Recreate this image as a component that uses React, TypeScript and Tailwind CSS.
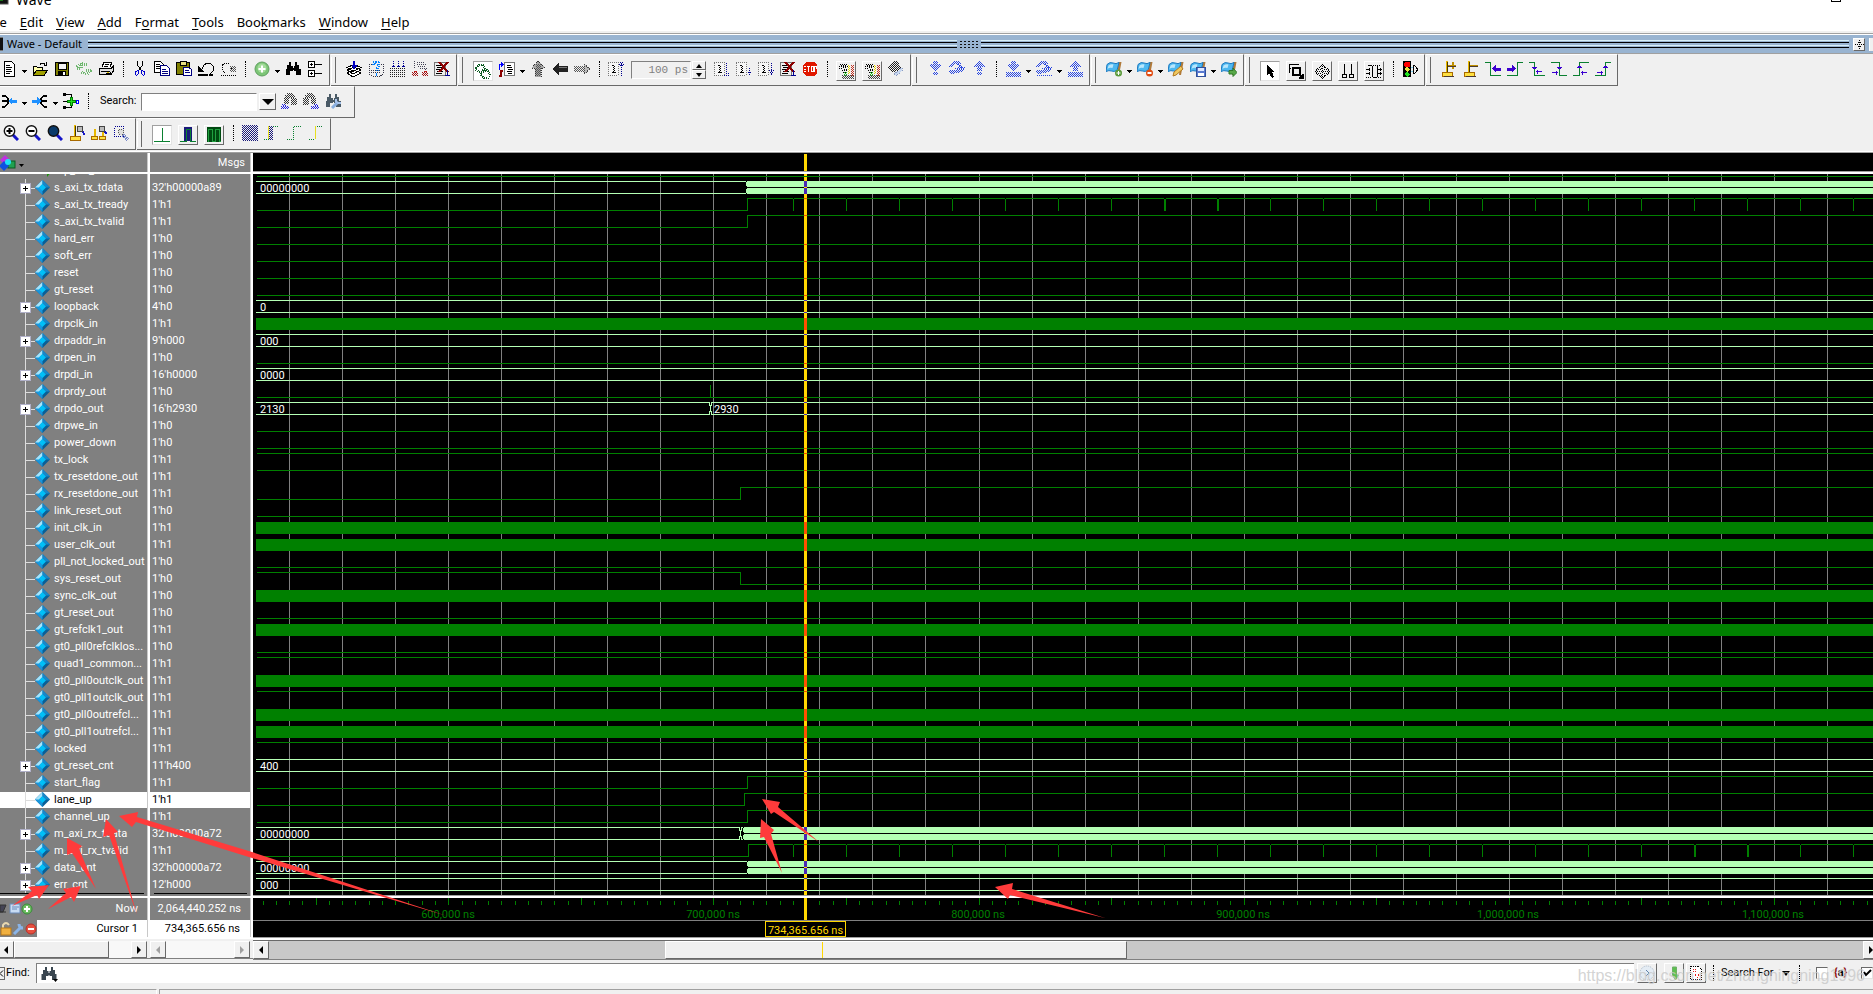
import React from 'react';

type Kind = 'low' | 'high' | 'clock' | 'bus';

interface Signal {
  name: string;
  value: string;
  kind: Kind;
  // x position where the level flips, or where a bus starts toggling
  edge?: number;
  label?: string;
  wide?: number[];
}

const SIGNALS: Signal[] = [
  { name: 's_axi_tx_tdata', value: "32'h00000a89", kind: 'bus', edge: 494, label: '00000000' },
  { name: 's_axi_tx_tready', value: "1'h1", kind: 'low', edge: 494, wide: [7, 8] },
  { name: 's_axi_tx_tvalid', value: "1'h1", kind: 'low', edge: 494 },
  { name: 'hard_err', value: "1'h0", kind: 'low' },
  { name: 'soft_err', value: "1'h0", kind: 'low' },
  { name: 'reset', value: "1'h0", kind: 'low' },
  { name: 'gt_reset', value: "1'h0", kind: 'low' },
  { name: 'loopback', value: "4'h0", kind: 'bus', label: '0' },
  { name: 'drpclk_in', value: "1'h1", kind: 'clock' },
  { name: 'drpaddr_in', value: "9'h000", kind: 'bus', label: '000' },
  { name: 'drpen_in', value: "1'h0", kind: 'low' },
  { name: 'drpdi_in', value: "16'h0000", kind: 'bus', label: '0000' },
  { name: 'drprdy_out', value: "1'h0", kind: 'low' },
  { name: 'drpdo_out', value: "16'h2930", kind: 'bus', label: '2130' },
  { name: 'drpwe_in', value: "1'h0", kind: 'low' },
  { name: 'power_down', value: "1'h0", kind: 'low' },
  { name: 'tx_lock', value: "1'h1", kind: 'high' },
  { name: 'tx_resetdone_out', value: "1'h1", kind: 'high' },
  { name: 'rx_resetdone_out', value: "1'h1", kind: 'low', edge: 487 },
  { name: 'link_reset_out', value: "1'h0", kind: 'low' },
  { name: 'init_clk_in', value: "1'h1", kind: 'clock' },
  { name: 'user_clk_out', value: "1'h1", kind: 'clock' },
  { name: 'pll_not_locked_out', value: "1'h0", kind: 'low' },
  { name: 'sys_reset_out', value: "1'h0", kind: 'high', edge: 487 },
  { name: 'sync_clk_out', value: "1'h0", kind: 'clock' },
  { name: 'gt_reset_out', value: "1'h0", kind: 'low' },
  { name: 'gt_refclk1_out', value: "1'h1", kind: 'clock' },
  { name: 'gt0_pll0refclklos...', value: "1'h0", kind: 'low' },
  { name: 'quad1_common...', value: "1'h1", kind: 'high' },
  { name: 'gt0_pll0outclk_out', value: "1'h1", kind: 'clock' },
  { name: 'gt0_pll1outclk_out', value: "1'h1", kind: 'high' },
  { name: 'gt0_pll0outrefcl...', value: "1'h1", kind: 'clock' },
  { name: 'gt0_pll1outrefcl...', value: "1'h1", kind: 'clock' },
  { name: 'locked', value: "1'h1", kind: 'high' },
  { name: 'gt_reset_cnt', value: "11'h400", kind: 'bus', label: '400' },
  { name: 'start_flag', value: "1'h1", kind: 'low', edge: 494 },
  { name: 'lane_up', value: "1'h1", kind: 'low', edge: 491 },
  { name: 'channel_up', value: "1'h1", kind: 'low', edge: 494 },
  { name: 'm_axi_rx_tdata', value: "32'h00000a72", kind: 'bus', edge: 491, label: '00000000' },
  { name: 'm_axi_rx_tvalid', value: "1'h1", kind: 'low', edge: 495, wide: [17, 18] },
  { name: 'data_cnt', value: "32'h00000a72", kind: 'bus', edge: 495, label: '00000000' },
  { name: 'err_cnt', value: "12'h000", kind: 'bus', label: '000' },
];

const SELECTED = 'lane_up';
const WAVE_W = 2600;
const CURSOR_X = 551;
const GREEN = '#008000';
const PALE = '#b4ffb4';
const ORANGE = '#ff4500';
const PURPLE = '#4b28b4';
const GOLD = '#ffd700';

const range = (n: number) => Array.from({ length: n }, (_, i) => i);

/* ---------- toolbar icons, 16x16 grid ---------- */

const Doc = ({ x = 0, c = '#000' }: { x?: number; c?: string }) => (
  <g>
    <path d={`M${x + 1.5} .5h7l3 3v12h-10z`} fill="#fff" stroke={c} />
    <path d={`M${x + 3} 4.5h4M${x + 3} 6.5h6M${x + 3} 8.5h5M${x + 3} 10.5h6M${x + 3} 12.5h4`} stroke={c} />
  </g>
);

// checkered fill, the look of a disabled icon
const Dither = ({ x, y, w, h, c }: { x: number; y: number; w: number; h: number; c: string }) => (
  <g stroke={c} strokeDasharray="1 1">
    {range(h).map((i) => <path key={i} d={`M${x} ${y + i + 0.5}h${w}`} strokeDashoffset={i % 2} />)}
  </g>
);

const WaveDoc = ({ arrow }: { arrow: string }) => (
  <g>
    <rect x=".5" y="1.5" width="10" height="13" rx="1" fill="#f6f6f6" stroke="#777" strokeDasharray="1 1" />
    <path d="M4 4.500h2M4 11.500h4" stroke="#000" />
    <Dither x={5} y={4} w={2} h={8} c="#000" />
    <path d={arrow} stroke="#000090" fill="none" strokeDasharray="1 1" strokeWidth="1" />
  </g>
);

const StopDoc = () => (
  <g>
    <rect x=".5" y="1.5" width="11" height="13" fill="#eee" stroke="#777" />
    <path d="M2 4.5h6M3 6.5h5M2 8.5h5M3 10.5h6M2 12.5h6" stroke="#000" />
    <path d="M5 1l9 10M14 1L5 11" stroke="#8b0000" strokeWidth="2" />
    <path d="M13.5 9v5M11 14.5h5" stroke="#000090" strokeWidth="1" />
  </g>
);

const Flag = ({ children }: { children: React.ReactNode }) => (
  <g shapeRendering="auto">
    <path d="M12.500 1h3l-2.500 13h-2z" fill="#b07a3a" />
    <path d="M1 3.500q3-3 6-1.500t6-.500l-2 8q-3 1.500-5.500.500T0 10.500z" fill="#4db8f0" stroke="#1a78c0" />
    <path d="M2.500 4.500q3-2 5-1l-1 3.500q-3-1-5 1z" fill="#b9e6fc" />
    {children}
  </g>
);

const Bin = ({ c = '#000', dash = 'none' }: { c?: string; dash?: string }) => (
  <g stroke={c} strokeDasharray={dash}>
    <path d="M5 1v5M11 1v5" strokeWidth="2" />
    <path d="M3.500 4v9M6 5v5M10 5v5M12.500 4v9" strokeWidth="3" />
    <path d="M1.500 8v6M14.500 8v6M7 8h2" strokeWidth="2" />
    <path d="M1 13h4M11 13h4" strokeWidth="2" />
  </g>
);

const Lens = ({ fill, sign }: { fill: string; sign: string }) => (
  <g shapeRendering="auto">
    <path d="M10 10l5 5" stroke="#1414c8" strokeWidth="3" />
    <circle cx="6.500" cy="6" r="5.200" fill={fill} stroke="#111" strokeWidth="1.400" />
    <path d={sign} stroke="#000" strokeWidth="2" />
  </g>
);

const Pin = ({ x = 0 }: { x?: number }) => (
  <g>
    <path d={`M${x + 5.500} 0v11`} stroke="#e8b800" strokeWidth="2" />
    <path d={`M${x + 6.500} 1v10`} stroke="#4a3a00" />
    <rect x={x + 1} y="11" width="10" height="4" fill="#ffe040" stroke="#a86a00" />
  </g>
);

// rows of [start, length] dashes
const Dots = ({ rows, c }: { rows: [number, number][]; c: string }) => (
  <g stroke={c} strokeDasharray="1 1">
    {rows.map(([x, w], i) => w > 0 && <path key={i} d={`M${x} ${i + 0.5}h${w}`} />)}
  </g>
);

const STEP = '#2846e0';
const DOWN: [number, number][] = [[7, 3], [6, 5], [7, 3], [4, 9], [3, 11], [4, 9], [5, 7], [6, 5], [7, 3], [8, 1], [0, 0], [7, 3], [6, 5], [7, 3]];
const DOWN_BOX: [number, number][] = [...DOWN.slice(0, 10), [0, 0], [1, 15], [2, 13], [1, 15], [2, 13], [1, 15]];
const UP: [number, number][] = [[8, 1], [7, 3], [6, 5], [5, 7], [4, 9], [3, 11], [7, 3], [6, 5], [7, 3], [6, 5], [0, 0], [7, 3], [6, 5], [7, 3]];
const UP_BOX: [number, number][] = [...UP.slice(0, 10), [0, 0], [1, 15], [2, 13], [1, 15], [2, 13], [1, 15]];
const OVER: [number, number][] = [[5, 5], [4, 7], [3, 9], [2, 3], [1, 3], [0, 3], [9, 7], [6, 10], [8, 8], [1, 13], [0, 14], [1, 10], [2, 3]];
const OVER_BOX: [number, number][] = [...OVER, [0, 0], [1, 15]];
const OVER_CURVE = <path d="M9 3l4 4" stroke={STEP} strokeWidth="2" strokeDasharray="1 1" />;

const ICONS: Record<string, React.ReactNode> = {
  new: <Doc x={2} />,
  open: (
    <g>
      <path d="M1.500 13.500v-8h3l1 1h5v2" fill="#ffffb0" stroke="#000" />
      <path d="M1.500 14l3-5h11l-3 5z" fill="#a0a000" stroke="#000" />
      <path d="M8 3.500q3-3 5 0M14.500 1v3h-3" fill="none" stroke="#000" />
    </g>
  ),
  save: (
    <g>
      <rect x="1.500" y="1.500" width="13" height="13" fill="#808000" stroke="#000" />
      <rect x="4" y="2" width="8" height="6" fill="#f4f4f4" stroke="#000" />
      <rect x="4" y="10" width="8" height="5" fill="#000" />
      <rect x="9" y="11" width="2" height="3" fill="#fff" />
    </g>
  ),
  reload: (
    <g stroke="#6fb76f" strokeWidth="3" fill="none" strokeDasharray="1 1">
      <path d="M1 6q3-4 7-3l3 1M5 2v5h-4M15 9q-3 5-7 3l-3-1M10 9h5v3" />
    </g>
  ),
  print: (
    <g>
      <path d="M4 6l2-5h8l-2 5" fill="#fff" stroke="#000" />
      <path d="M1 7.500h12l2-2v5l-2 3H1z" fill="#e0e0e0" stroke="#000" />
      <path d="M3 10.500h9M2 13.500h9l2-2M7 3h4M6 5h4" stroke="#000" />
      <rect x="9" y="11" width="2" height="1" fill="#e0c000" />
    </g>
  ),
  cut: (
    <g fill="none">
      <path d="M5.500 0v4l4 6M10.500 0v4l-4 6" stroke="#000" />
      <path d="M6 9.500l-2.500 1v3l1 1 2-2zM10 9.500l2.500 1v3l-1 1-2-2z" stroke="#0000d0" strokeWidth="1" />
    </g>
  ),
  copy: (
    <g>
      <path d="M.5 .5h6l3 3v8h-9z" fill="#fff" stroke="#000" />
      <path d="M2 3.500h4M2 5.500h5M2 7.500h5" stroke="#000" />
      <path d="M6.500 4.500h6l3 3v7h-9z" fill="#fff" stroke="#000080" />
      <path d="M8 8.500h4M8 10.500h6M8 12.500h6" stroke="#000080" />
    </g>
  ),
  paste: (
    <g>
      <rect x=".5" y="1.500" width="13" height="12" fill="#808000" stroke="#000" />
      <rect x="4" y="0" width="6" height="4" fill="#e8e080" stroke="#000" />
      <path d="M7.500 6.500h5l3 2v6h-8z" fill="#fff" stroke="#000080" />
      <path d="M9 9.500h4M9 11.500h5" stroke="#000080" />
    </g>
  ),
  undo: (
    <g>
      <path d="M4 8l2-4 3-2h3l3 3v5l-3 3" fill="none" stroke="#000" />
      <path d="M0 5v6h6z" fill="#000" />
      <path d="M0 14h10M11 14h4" stroke="#000" strokeWidth="2" />
    </g>
  ),
  redo: (
    <g fill="none" stroke="#000" strokeDasharray="1 1">
      <path d="M12 8l-2-4-3-2H5L2 4v5l3 3M1 14.500h15" />
      <Dither x={10} y={5} w={6} h={6} c="#555" />
    </g>
  ),
  plus: (
    <g shapeRendering="auto">
      <circle cx="8" cy="8" r="7" fill="#7cc576" stroke="#5f9f5f" />
      <circle cx="8" cy="7" r="4.500" fill="#a4dc9c" />
      <path d="M8 4.500v7M4.500 8h7" stroke="#fff" strokeWidth="2" />
    </g>
  ),
  find: <Bin />,
  tree: (
    <g>
      <rect x="1.500" y=".5" width="6" height="6" fill="#fff" stroke="#000" />
      <rect x="1.500" y="9.500" width="6" height="6" fill="#fff" stroke="#000" />
      <path d="M3 3.500h3M4.500 2v3M3 12.500h3M4.500 11v3M8 3.500h7M8 12.500h7" stroke="#000" />
    </g>
  ),
  layers: (
    <g>
      <path d="M1 12l7-3 7 3-8 4zM1 9l7-3 7 3-8 4zM1 6.500l7-3 7 3-8 4z" fill="#fff" stroke="#000" />
      <path d="M8 0v5M5.500 5h5M7 7h2" stroke="#0000c0" strokeWidth="2" />
    </g>
  ),
  query: (
    <g>
      <path d="M1 3h3M11 3h4v10l-3 2H4l-3-2V3" stroke="#334" fill="none" strokeDasharray="1 1" />
      <path d="M5 4q0-3 4-2.500t0 6v3M8 13h2" stroke="#0080ff" strokeWidth="3" fill="none" strokeDasharray="1 1" />
      <path d="M3 9.500h10M3 11.500h10" stroke="#334" strokeDasharray="1 1" />
    </g>
  ),
  simulate: (
    <g>
      <path d="M3.500 0v5M8.500 0v5M13.500 0v5" stroke="#000090" strokeDasharray="1 1" />
      <path d="M2 5.500h3M7 5.500h3M12 5.500h3" stroke="#000090" />
      <path d="M0 7.500h16M0 9.500h16M0 11.500h16M0 13.500h16M0 15.500h16" stroke="#222" strokeDasharray="1 1" />
    </g>
  ),
  breaks: (
    <g>
      <path d="M2.500 0v7M5 1.500h7M5 3.500h9M6 5.500h8M8 7.500h7M13.500 8v3" stroke="#445" strokeDasharray="1 1" />
      <Dither x={0} y={11} w={6} h={4} c="#a01010" />
      <Dither x={10} y={11} w={6} h={4} c="#a01010" />
      <path d="M2 10.500h3M12 10.500h3" stroke="#c02020" />
    </g>
  ),
  end: <StopDoc />,
  link: (
    <g fill="none" stroke="#0a5a20">
      <path d="M1 5l3-3h4l2 3v3l-2 1H4L1 7z" strokeWidth="2" strokeDasharray="1 1" />
      <path d="M6 9l2-2h4l3 4v2l-2 2H9l-3-3z" strokeWidth="2" strokeDasharray="1 1" />
    </g>
  ),
  jump: (
    <g>
      <rect x="5.500" y="1.500" width="10" height="13" fill="#fff" stroke="#777" />
      <path d="M8 4.500h4M8 6.500h5M9 8.500h5M8 10.500h5M9 12.500h4" stroke="#000" />
      <path d="M.500 9V3.500h2" stroke="#0000ff" fill="none" />
      <path d="M2 1l3 2.500-3 2.500z" fill="#0000ff" />
      <path d="M0 15h2v-5h2" stroke="#8b0000" strokeWidth="2" fill="none" />
    </g>
  ),
  up: (
    <g>
      <path d="M8 0l6 6v1h-3v9H5V7H2V6z" fill="#a8a8a8" />
      <path d="M8 0l6 6v1h-3v9H5V7H2V6z" fill="none" stroke="#333" strokeDasharray="1 1" />
      <Dither x={6} y={3} w={5} h={12} c="#555" />
    </g>
  ),
  left: (
    <g>
      <path d="M0 8l7-6v3h9v6H7v3z" fill="#222" />
      <path d="M7 6.500h8" stroke="#777" />
    </g>
  ),
  right: (
    <g>
      <Dither x={0} y={5} w={10} h={6} c="#555" />
      <path d="M16 8l-6-5v10z" fill="#bbb" stroke="#444" strokeDasharray="1 1" />
    </g>
  ),
  restart: <WaveDoc arrow="M13.500 15V2M12 1.500h4M12 4.500h4M11 3.500h5" />,
  run: <WaveDoc arrow="M12.500 2v10M10 14.500h6M12 12.500h3" />,
  runAll: <WaveDoc arrow="M13.500 7v7M12 11.500h4M13 13.500h2" />,
  cont: <WaveDoc arrow="M13.500 2v12M11 9.500h5M12 11.500h4M13 13.500h2" />,
  stop: (
    <g>
      <path d="M4 1h8l3 3v8l-3 3H4l-3-3V4z" fill="#e01800" />
      <path d="M2 5.500h2M2 8h2M2 10.500h2M5 5.500h3M6.500 6v5M9 5.500h2v5H9zM12.500 5v6M12 5.500h2v2.500" stroke="#fff" fill="none" />
    </g>
  ),
  profile: (
    <g>
      <path d="M1 3.500h4M2 1.500h7M1 5.500h3M5 3.500h5M4 7.500h5M5 9.500h4" stroke="#000" fill="none" strokeDasharray="1 1" />
      <path d="M5 4.500h4M6 6.500h3M3 2.500h5" stroke="#000" fill="none" strokeDasharray="1 1" />
      <Dither x={4} y={12} w={12} h={4} c="#444" />
      <Dither x={10} y={2} w={2} h={9} c="#e8d800" />
      <Dither x={13} y={2} w={3} h={11} c="#c03020" />
      <Dither x={6} y={9} w={3} h={4} c="#20c020" />
    </g>
  ),
  hand: (
    <g>
      <Dots c="#222" rows={[[6, 3], [5, 5], [4, 7], [3, 8], [2, 9], [1, 12], [0, 13], [1, 11], [2, 9], [3, 7], [4, 3]]} />
      <path d="M6 13l8-6v3l-6 5z" fill="#c8d8f0" stroke="#8a9ac0" strokeDasharray="1 1" />
    </g>
  ),
  stepIn: <Dots rows={DOWN} c={STEP} />,
  stepOver: <g><Dots rows={OVER} c={STEP} />{OVER_CURVE}</g>,
  stepOut: <Dots rows={UP} c={STEP} />,
  stepInC: <Dots rows={DOWN_BOX} c={STEP} />,
  stepOverC: <g><Dots rows={OVER_BOX} c={STEP} />{OVER_CURVE}</g>,
  stepOutC: <Dots rows={UP_BOX} c={STEP} />,
  flagAdd: (
    <Flag>
      <circle cx="12.500" cy="12" r="3.500" fill="#5a9a3a" />
      <path d="M12.500 10v4M10.500 12h4" stroke="#fff" />
    </Flag>
  ),
  flagDel: (
    <Flag>
      <circle cx="12.500" cy="12" r="3.500" fill="#e04a10" />
      <path d="M10.500 12h4" stroke="#fff" strokeWidth="2" />
    </Flag>
  ),
  flagEdit: (
    <Flag>
      <path d="M5 15l1-4 7-6 2 3-7 6z" fill="#f0c860" stroke="#b07820" />
    </Flag>
  ),
  flagSave: (
    <Flag>
      <rect x="6.500" y="6.500" width="9" height="9" fill="#5a7ad0" stroke="#30509a" />
      <rect x="8" y="7" width="6" height="3" fill="#dfe8ff" />
      <rect x="8" y="12" width="6" height="3" fill="#fff" />
    </Flag>
  ),
  flagGo: (
    <Flag>
      <path d="M8 9.500h4V7l4 4.500-4 4V13H8z" fill="#58a848" stroke="#2f7a28" />
    </Flag>
  ),
  select: <path d="M5 2v10l2-2 3 5 2-1-2-5h3z" fill="#000" />,
  zoomBox: (
    <g>
      <path d="M1.500 10V1.500H11M1 5h2" stroke="#000" fill="none" />
      <rect x="5" y="5" width="7" height="7" fill="none" stroke="#000" strokeWidth="2" />
      <path d="M11 11l4 4M15 11v4h-4" stroke="#000" strokeWidth="2" />
    </g>
  ),
  pan: (
    <g fill="none" stroke="#000">
      <path d="M8.500 1v15M1 8.500h15" strokeDasharray="1 1" />
      <path d="M6 3.500h1M7 2.500h1M9 2.500h1M10 3.500h1M5 4.500h1M11 4.500h1M6 13.500h1M7 14.500h1M9 14.500h1M10 13.500h1M5 12.500h1M11 12.500h1" />
      <path d="M3.500 5v1M2.500 6v2M1.500 8v1M2.500 9v2M3.500 11v1M13.500 5v1M14.500 6v2M15.500 8v1M14.500 9v2M13.500 11v1" />
      <path d="M4 6.500h3v-2M10 4v2.500h3M4 10.500h3v3M13 10.500h-3v3" strokeDasharray="1 1" />
    </g>
  ),
  twoCur: <path d="M4.500 1v10M11.500 1v10M2.500 11.500h4v3h-4zM9.500 11.500h4v3h-4z" stroke="#000" fill="none" />,
  edit: (
    <g stroke="#000" fill="none">
      <path d="M2 2.500h3.500M6.500 3v11M11.500 2v12M7 14.500h4" />
      <path d="M0 6.500h4M0 10.500h4M12 6.500h4M12 10.500h4M3 5v3M3 9v3M14 5v3M14 9v3" />
      <path d="M7 2.500h8M12 14.500h4M0 14.500h5" strokeDasharray="1 1" />
    </g>
  ),
  light: (
    <g>
      <rect x="1" y="0" width="8" height="16" fill="#000" />
      <path d="M3 1h4l1 1v3L7 6H3L2 5V2z" fill="#f00" />
      <path d="M5 6l3 2-3 3-3-3z" fill="#e8e040" />
      <path d="M5 11l3 2-3 3-3-3z" fill="#20e020" />
      <path d="M11.500 4v9M12 4l4 4.500-4 4.500" stroke="#000" fill="none" />
      <path d="M9 6.500h2M9 10.500h2" stroke="#80d0f0" />
    </g>
  ),
  curAdd: (
    <g>
      <Pin />
      <path d="M7 4.500h8M11.500 1v7" stroke="#c09000" strokeWidth="2" />
      <path d="M7 5.500h8M3 15.500h10" stroke="#4a3a30" />
    </g>
  ),
  curDel: (
    <g>
      <Pin />
      <path d="M7 4.500h8" stroke="#c09000" strokeWidth="2" />
      <path d="M7 5.500h8M3 15.500h10" stroke="#4a3a30" />
    </g>
  ),
  prevEdge: (
    <g fill="none">
      <path d="M0 1.500h5.500v13H16" stroke="#0a8030" />
      <path d="M7 7.500l4-4v3h5v3h-5v2z" fill="#3c00d0" />
    </g>
  ),
  nextEdge: (
    <g fill="none">
      <path d="M16 1.500h-5.500v13H0" stroke="#0a8030" />
      <path d="M9 7.500l-4-4v3H0v3h5v2z" fill="#3c00d0" />
    </g>
  ),
  prevFall: (
    <g fill="none">
      <path d="M0 1.500h5.500v13H16" stroke="#0a8030" />
      <path d="M3 6.500h5M4 7.500h3M7 10.500h6M8.500 8.500v4" stroke="#3c00d0" />
    </g>
  ),
  nextFall: (
    <g fill="none">
      <path d="M0 1.500h8.500v13H16" stroke="#0a8030" />
      <path d="M6 6.500h5M7 7.500h3M1 11.500h6M5.500 9.500v4" stroke="#3c00d0" />
    </g>
  ),
  prevRise: (
    <g fill="none">
      <path d="M16 1.500H6.500v13H0" stroke="#0a8030" />
      <path d="M4 6.500h5M5 5.500h3M8 11.500h6M9.500 9.500v4" stroke="#3c00d0" />
    </g>
  ),
  nextRise: (
    <g fill="none">
      <path d="M16 1.500h-5.500v13H0" stroke="#0a8030" />
      <path d="M8 6.500h5M9 5.500h3M2 11.500h6M6.500 9.500v4" stroke="#3c00d0" />
    </g>
  ),
  expand: (
    <g>
      <path d="M1 2.500h3l3 3v5l-3 3H1M1 8h5" stroke="#000" strokeWidth="2" fill="none" />
      <path d="M7 8l4-4v2.500h5v3h-5V12z" fill="#1e90ff" />
    </g>
  ),
  collapse: (
    <g>
      <path d="M15 2.500h-3l-3 3v5l3 3h3M10 8h5" stroke="#000" strokeWidth="2" fill="none" />
      <path d="M9 8L5 4v2.500H0v3h5V12z" fill="#1e90ff" />
    </g>
  ),
  addTree: (
    <g>
      <path d="M0 1.500h4M0 8.500h4M0 14.500h4M4 1.500h4v4M8 11v3.500H4M11 8.500h3" stroke="#000" strokeWidth="1" fill="none" />
      <rect x="0" y="0" width="3" height="3" fill="#000" />
      <rect x="0" y="13" width="3" height="3" fill="#000" />
      <path d="M8.500 4v9M4 8.500h9" stroke="#008000" strokeWidth="3" />
      <path d="M8.500 5v7M5 8.500h7" stroke="#20e020" />
      <rect x="13.500" y="7.500" width="2" height="3" fill="#fff" stroke="#0000ff" />
    </g>
  ),
  searchBack: (
    <g>
      <Dither x={6} y={0} w={6} h={2} c="#333" />
      <Dither x={4} y={2} w={10} h={3} c="#333" />
      <Dither x={3} y={5} w={5} h={6} c="#333" />
      <Dither x={10} y={5} w={6} h={7} c="#333" />
      <Dither x={1} y={11} w={4} h={2} c="#2020e0" />
      <Dither x={0} y={13} w={8} h={3} c="#2020e0" />
    </g>
  ),
  searchFwd: (
    <g>
      <Dither x={4} y={0} w={6} h={2} c="#333" />
      <Dither x={2} y={2} w={10} h={3} c="#333" />
      <Dither x={0} y={5} w={6} h={7} c="#333" />
      <Dither x={8} y={5} w={5} h={6} c="#333" />
      <Dither x={11} y={11} w={4} h={2} c="#2020e0" />
      <Dither x={8} y={13} w={8} h={3} c="#2020e0" />
    </g>
  ),
  searchOpt: (
    <g>
      <Bin c="#4a5a66" />
      <path d="M7 15l6-6" stroke="#8ab0e0" strokeWidth="3" shapeRendering="auto" />
      <path d="M11 6v3l2 1h3" stroke="#a8c4ec" strokeWidth="2" fill="none" shapeRendering="auto" />
    </g>
  ),
  zoomIn: <Lens fill="#fff" sign="M3.500 6h6M6.500 3v6" />,
  zoomOut: <Lens fill="#fff" sign="M3.500 6h6" />,
  zoomFull: <Lens fill="#0a3a6a" sign="" />,
  zoomCur: (
    <g>
      <Pin />
      <path d="M13 6l3 4" stroke="#1414c8" strokeWidth="2" />
      <circle cx="11" cy="4" r="3" fill="#bbb" stroke="#444" />
    </g>
  ),
  zoomTwo: (
    <g>
      <path d="M3.500 4v8M11.500 4v8" stroke="#e8b800" strokeWidth="2" />
      <path d="M.5 11.500h6v3h-6zM8.500 11.500h6v3h-6z" fill="#ffe040" stroke="#a86a00" />
      <path d="M13 6l3 3" stroke="#1414c8" strokeWidth="2" />
      <circle cx="11" cy="4" r="3" fill="#bbb" stroke="#444" />
    </g>
  ),
  zoomArea: (
    <g>
      <rect x="1.500" y="1.500" width="9" height="10" fill="none" stroke="#000090" strokeDasharray="1 1" />
      <circle cx="8" cy="7" r="3" fill="#ddd" stroke="#555" strokeDasharray="1 1" />
      <path d="M10 10l5 5" stroke="#7a8ac8" strokeWidth="3" strokeDasharray="1 1" />
    </g>
  ),
  modeLine: <path d="M0 14.500h16M8.500 1v13" stroke="#0a8030" />,
  modeBlue: (
    <g>
      <rect x="4" y="0" width="8" height="14" fill="#1a1a7a" />
      <path d="M0 14.500h6V2.500h4v12h6" stroke="#0a8030" fill="none" />
    </g>
  ),
  modeGreen: (
    <g>
      <rect x="1" y="0" width="14" height="15" fill="#004a10" />
      <path d="M2 14.500V2.500h4v12h3V2.500h4v12h2" stroke="#20a040" fill="none" />
    </g>
  ),
  dither: <Dither x={0} y={0} w={16} h={16} c="#1a1a7a" />,
  ditherEdge: (
    <g>
      <path d="M4.500 1v14" stroke="#e8e020" />
      <Dither x={5} y={1} w={4} h={14} c="#1a1a7a" />
      <path d="M0 14.500h5M9 1.500h6" stroke="#0a8030" strokeDasharray="1 1" />
    </g>
  ),
  dotEdge: <path d="M1 14.500h6.500V1.500H15" stroke="#0a8030" fill="none" strokeDasharray="1 1" />,
  dotEdgeY: (
    <g>
      <path d="M7.500 1v13" stroke="#e8e020" />
      <path d="M1 14.500h6M9 1.500h6" stroke="#0a8030" strokeDasharray="1 1" />
    </g>
  ),
};

const Icon = ({ name }: { name: string }) => (
  <svg viewBox="0 0 16 16" className="w-4 h-4 shrink-0" shapeRendering="crispEdges" aria-hidden="true">
    {ICONS[name]}
  </svg>
);

const Caret = () => (
  <button aria-label="More" className="w-[9px] h-4 flex items-end justify-center pb-1 shrink-0">
    <svg viewBox="0 0 5 3" className="w-[5px] h-[3px]" shapeRendering="crispEdges"><path d="M0 0h5L2.500 3z" /></svg>
  </button>
);

const Sep = () => (
  <span className="w-3 h-4 flex justify-center shrink-0"><span className="border-l border-dotted border-black h-4" /></span>
);

// '|' is a separator, 'v' a caret, '[name' a raised button, '(name' a pressed one
const Tools = ({ items }: { items: string[] }) => (
  <>
    {items.map((item, i) => {
      if (item === '|') return <Sep key={i} />;
      if (item === 'v') return <Caret key={i} />;
      if (item[0] === '[' || item[0] === '(') {
        const look = item[0] === '['
          ? 'border-t-white border-l-white border-b-[#696969] border-r-[#696969]'
          : 'bg-white border-t-[#a0a0a0] border-l-[#a0a0a0] border-b-[#e3e3e3] border-r-[#e3e3e3]';
        return (
          <span key={i} className="w-[26px] flex justify-center shrink-0">
            <button aria-label={item.slice(1)} className={`w-5 h-5 border flex items-center justify-center ${look}`}>
              <Icon name={item.slice(1)} />
            </button>
          </span>
        );
      }
      return (
        <button key={i} aria-label={item} className="w-[22px] flex justify-center shrink-0"><Icon name={item} /></button>
      );
    })}
  </>
);

const Group = ({ handle = true, children }: { handle?: boolean; children: React.ReactNode }) => (
  <div className="flex items-start h-8 pt-1.5 pr-[3px] mr-px border-t border-t-white border-r border-r-[#696969] border-b border-b-[#696969] shrink-0">
    {handle && <span className="w-[5px] h-[26px] -mt-1 mr-[7px] border-l border-l-white border-r border-r-[#696969]" />}
    {children}
  </div>
);

/* ---------- signal list ---------- */

const TreeIcon = ({ bus }: { bus: boolean }) => (
  <svg viewBox="0 0 52 17" className="w-[52px] h-[17px] shrink-0" aria-hidden="true">
    <g shapeRendering="crispEdges">
      <path d="M25.500 0v17M26 9.500h9" stroke="#dcdcdc" />
      {bus && (
        <g>
          <rect x="20.500" y="4.500" width="10" height="10" fill="#fff" stroke="#b0b0c8" />
          <path d="M23 9.500h5M25.500 7v5" stroke="#000" />
        </g>
      )}
    </g>
    <path d="M42.500 1l7.500 7.500-7.500 7.500-7.500-7.500z" fill="#0a5f96" />
    <path d="M42.500 1v15L35 8.500z" fill="#1a96dc" />
    <path d="M42.500 1L35 8.500h4l3.500-3.500z" fill="#a8e4fa" />
    <path d="M42.500 1l7.500 7.500h-4l-3.500-3.500z" fill="#1a86c8" />
    <path d="M42.500 5l3.500 3.500-3.500 3.500-3.500-3.500z" fill="#00c0f8" />
  </svg>
);

const CELL = 'p-0 border-r-2 border-r-white shadow-[inset_-1px_0_0_#c8c8c8]';

const SignalTable = () => (
  <table className="table-fixed border-separate border-spacing-0 w-[253px] bg-[#808080] text-white text-[11px] leading-4">
    <colgroup>
      <col className="w-[150px]" />
      <col className="w-[103px]" />
    </colgroup>
    <thead>
      <tr className="h-[21px]">
        <th scope="col" aria-label="Signal" className={`${CELL} border-b-2 border-b-white align-middle`}>
          <svg viewBox="0 0 26 16" className="w-[26px] h-4" aria-hidden="true">
            <rect x="8" y="6" width="7" height="7" fill="#20a050" stroke="#0a5a20" />
            <path d="M5 0l5 5-5 5-5-5z" fill="#c030e0" />
            <path d="M4 6l5 5-5 5-5-5z" fill="#1050e0" />
            <circle cx="8" cy="7" r="3" fill="#20e0f8" />
            <path d="M19 9h5l-2.500 3z" fill="#000" />
          </svg>
        </th>
        <th scope="col" className={`${CELL} border-b-2 border-b-white font-normal text-right leading-[18px]`}><span className="mr-1.5">Msgs</span></th>
      </tr>
    </thead>
    <tbody>
      <tr>
        <td className={CELL}>
          <div className="h-[5px] overflow-hidden flex items-end">
            <div className="flex items-center">
              <svg viewBox="0 0 52 17" className="w-[52px] h-[17px]" aria-hidden="true">
                <path d="M42 6h5v-3l5 6-5 6v-3h-5z" fill="#209010" />
              </svg>
              <span className="ml-0.5">drp_clk_in</span>
            </div>
          </div>
        </td>
        <td className={CELL} />
      </tr>
      {SIGNALS.map((s) => {
        const row = s.name === SELECTED ? 'bg-white text-black shadow-[inset_0_1px_0_#808080]' : '';
        return (
          <tr key={s.name}>
            <td className={CELL}>
              <div className={`h-[17px] w-[147px] flex items-start overflow-hidden leading-[18px] ${row}`}>
                <TreeIcon bus={s.kind === 'bus'} />
                <span className="ml-0.5 whitespace-nowrap">{s.name}</span>
              </div>
            </td>
            <td className={CELL}>
              <div className={`h-[17px] w-[100px] flex items-start leading-[18px] ${row}`}>
                <span className="pl-0.5">{s.value}</span>
              </div>
            </td>
          </tr>
        );
      })}
      <tr>
        <td className={`${CELL} border-b-2 border-b-white`}><div className="h-[3px] border-t border-black mr-1" /></td>
        <td className={`${CELL} border-b-2 border-b-white`}><div className="h-[3px] border-t border-black mx-1" /></td>
      </tr>
    </tbody>
    <tfoot>
      <tr>
        <th scope="row" className={`${CELL} font-normal`}>
          <div className="h-[22px] leading-[22px] flex items-center justify-between pr-2.5">
            <svg viewBox="0 0 33 16" className="w-[33px] h-4" aria-hidden="true">
              <path d="M0 4h6l-3 7H0zM0 11h6" fill="#445" stroke="#333" />
              <rect x="10" y="3" width="10" height="9" fill="#c8dcf4" stroke="#6a8ab8" />
              <path d="M12 6h7M12 8h5" stroke="#6a8ab8" />
              <circle cx="27" cy="8" r="5" fill="#6cbc60" stroke="#3a8a3a" />
              <path d="M27 5v6M24 8h6" stroke="#fff" strokeWidth="2" />
            </svg>
            <span>Now</span>
          </div>
        </th>
        <td className={CELL}><div className="h-[22px] leading-[22px] text-right pr-2.5">2,064,440.252 ns</div></td>
      </tr>
      <tr className="text-black">
        <th scope="row" className={`${CELL} font-normal border-b-2 border-b-white`}>
          <div className="h-[17px] flex items-center">
            <svg viewBox="0 0 37 16" className="w-[37px] h-4 shrink-0" aria-hidden="true">
              <path d="M3 7V4q3-4 6 0" fill="none" stroke="#e8d8b0" strokeWidth="2" />
              <rect x="1" y="7" width="10" height="7" fill="#f0b040" stroke="#b87818" />
              <path d="M14 13l6-6M19 3q0 4 4 4" stroke="#8ab4e8" strokeWidth="3" fill="none" />
              <circle cx="31" cy="8" r="5" fill="#e85040" stroke="#b83028" />
              <path d="M28 8h6" stroke="#fff" strokeWidth="2" />
            </svg>
            <span className="flex-1 bg-white h-[17px] leading-[18px] text-right pr-[9px] mr-px">Cursor 1</span>
          </div>
        </th>
        <td className={`${CELL} border-b-2 border-b-white`}>
          <div className="h-[17px] leading-[18px] w-[100px] bg-white text-right pr-2.5">734,365.656 ns</div>
        </td>
      </tr>
    </tfoot>
  </table>
);

/* ---------- wave area ---------- */

const R = ({ x, y, w, h, c }: { x: number; y: number; w: number; h: number; c: string }) => (
  <rect x={x} y={y} width={w} height={h} fill={c} />
);

const BitWave = ({ s, y }: { s: Signal; y: number }) => {
  const before = s.kind === 'high' ? 2 : 14;
  if (s.edge === undefined) {
    return (
      <g>
        <R x={4} y={y + before} w={WAVE_W} h={1} c={GREEN} />
        <R x={CURSOR_X} y={y + before} w={3} h={1} c={ORANGE} />
      </g>
    );
  }
  const after = 16 - before;
  return (
    <g>
      <R x={4} y={y + before} w={s.edge - 4} h={1} c={GREEN} />
      <R x={s.edge} y={y + 2} w={1} h={13} c={GREEN} />
      <R x={s.edge} y={y + after} w={WAVE_W} h={1} c={GREEN} />
      <R x={CURSOR_X} y={y + after} w={3} h={1} c={ORANGE} />
      {s.wide && range(38).map((k) => {
        const x = Math.floor(540 + 53.02 * k);
        const w = s.wide!.includes(k) ? 2 : 1;
        return (
          <g key={k}>
            <R x={x} y={y + 2} w={w} h={1} c="#000" />
            <R x={x} y={y + 3} w={w} h={12} c={GREEN} />
          </g>
        );
      })}
    </g>
  );
};

const BusWave = ({ s, y }: { s: Signal; y: number }) => {
  const end = s.edge ?? WAVE_W;
  return (
    <g>
      <R x={3} y={y + 2} w={end - 4} h={1} c={PALE} />
      <R x={3} y={y + 14} w={end - 4} h={1} c={PALE} />
      {s.edge === undefined ? (
        <g>
          <R x={CURSOR_X} y={y + 2} w={3} h={1} c={PURPLE} />
          <R x={CURSOR_X} y={y + 14} w={3} h={1} c={PURPLE} />
        </g>
      ) : (
        <g>
          <R x={end - 1} y={y + 3} w={1} h={4} c={PALE} />
          <R x={end - 1} y={y + 10} w={1} h={4} c={PALE} />
          <R x={end} y={y + 2} w={WAVE_W} h={6} c={PALE} />
          <R x={end} y={y + 8} w={WAVE_W} h={1} c="#000" />
          <R x={end} y={y + 9} w={WAVE_W} h={6} c={PALE} />
          <R x={CURSOR_X} y={y + 2} w={3} h={6} c={PURPLE} />
          <R x={CURSOR_X} y={y + 8} w={3} h={1} c={GOLD} />
          <R x={CURSOR_X} y={y + 9} w={3} h={6} c={PURPLE} />
        </g>
      )}
      <text x="7" y={y + 13} fill="#fff" className="text-[11px]">{s.label}</text>
    </g>
  );
};

const BusChange = ({ x, y }: { x: number; y: number }) => (
  <g>
    <R x={x} y={y + 2} w={1} h={13} c="#000" />
    <R x={x - 1} y={y + 3} w={1} h={3} c={PALE} />
    <R x={x} y={y + 5} w={1} h={7} c={PALE} />
    <R x={x - 1} y={y + 11} w={1} h={3} c={PALE} />
    <R x={x + 1} y={y + 3} w={1} h={3} c={PALE} />
    <R x={x + 1} y={y + 11} w={1} h={3} c={PALE} />
  </g>
);

const Waves = () => (
  <svg width={WAVE_W} height="721" shapeRendering="crispEdges" className="block bg-black" role="img" aria-label="Waveforms">
    {range(46).map((i) => <R key={i} x={Math.floor(36.4 + 53.05 * i)} y={0} w={1} h={721} c="#808080" />)}
    <R x={CURSOR_X} y={0} w={3} h={721} c={GOLD} />
    <R x={4} y={2} w={WAVE_W} h={1} c={GREEN} />
    {SIGNALS.map((s, i) => {
      const y = 5 + 17 * i;
      if (s.kind === 'bus') return <BusWave key={s.name} s={s} y={y} />;
      if (s.kind === 'clock') {
        return (
          <g key={s.name}>
            <R x={3} y={y + 3} w={WAVE_W} h={12} c={GREEN} />
            <R x={CURSOR_X} y={y + 3} w={3} h={12} c="#ff5000" />
          </g>
        );
      }
      return <BitWave key={s.name} s={s} y={y} />;
    })}
    {/* drprdy_out pulse and the drpdo_out value it latches */}
    <R x={457} y={211} w={1} h={12} c={GREEN} />
    <BusChange x={457} y={226} />
    <text x="461" y="239" fill="#fff" className="text-[11px]">2930</text>
    <BusChange x={487} y={651} />
  </svg>
);

const TimeAxis = () => (
  <svg width={WAVE_W} height="22" shapeRendering="crispEdges" className="block bg-black" role="img" aria-label="Time axis">
    {range(180).map((j) => {
      const major = (j - 4) % 10 === 0;
      return <R key={j} x={Math.floor(63.2 + 13.256 * (j - 4))} y={major ? 0 : 3} w={1} h={major ? 7 : 4} c={GREEN} />;
    })}
    {range(8).map((k) => (
      <text key={k} x={195 + 265 * k} y="20" fill={GREEN} textAnchor="middle" className="text-[11px]">
        {`${((k + 6) * 100000).toLocaleString('en-US')} ns`}
      </text>
    ))}
    <R x={CURSOR_X} y={0} w={3} h={22} c={GOLD} />
  </svg>
);

const ScrollButton = ({ dir, dim, label }: { dir: 'left' | 'right'; dim?: boolean; label: string }) => (
  <button aria-label={label} className="w-4 h-full shrink-0 bg-[#f0f0f0] border border-t-white border-l-white border-b-[#696969] border-r-[#696969] flex items-center justify-center">
    <svg viewBox="0 0 4 8" className="w-1 h-2"><path d={dir === 'left' ? 'M4 0v8L0 4z' : 'M0 0v8l4-4z'} fill={dim ? '#a0a0a0' : '#000'} /></svg>
  </button>
);

const RAISED = 'bg-[#f0f0f0] border border-t-white border-l-white border-b-[#696969] border-r-[#696969]';

const ARROWS = [
  '119,816 138,812 137,817 252,852 447,916 252,858 136,822 132,827',
  '106,819 118,832 114,833 137,915 109,835 103,837',
  '67,838 82,846 79,849 96,889 72,853 67,855',
  '49,885 28,887 32,891 12,906 37,895 39,899',
  '81,886 63,889 66,893 48,909 71,897 74,902',
  '762,799 780,802 778,807 819,842 774,812 771,814',
  '761,819 774,830 771,834 782,873 764,837 760,838',
  '995,887 1013,883 1012,889 1105,918 1010,895 1008,899',
];

const MENUS = [
  ['', 'F', 'ile'], ['', 'E', 'dit'], ['', 'V', 'iew'], ['', 'A', 'dd'], ['F', 'o', 'rmat'],
  ['', 'T', 'ools'], ['Boo', 'k', 'marks'], ['', 'W', 'indow'], ['', 'H', 'elp'],
];

const DockLines = () => (
  <span className="flex-1 h-2 flex flex-col justify-between">
    <span className="h-[3px] border-t border-t-[#d8f0f8] border-b border-b-black" />
    <span className="h-[3px] border-t border-t-[#d8f0f8] border-b border-b-black" />
  </span>
);

const App: React.FC = () => (
  <div className="relative min-h-screen overflow-hidden flex flex-col bg-[#f0f0f0] text-black text-[11px] leading-4 font-['Roboto','Noto_Sans',sans-serif]">
    <header className="bg-white font-['Noto_Sans',sans-serif]">
      <div className="h-3.5 overflow-hidden flex justify-between pr-8">
        <div className="flex items-end h-[7px] gap-[7px]">
          <svg viewBox="0 0 9 14" className="w-[9px] h-3.5" aria-hidden="true">
            <rect x="-6" y="0" width="14" height="11" fill="#111" stroke="#555" />
            <path d="M0 7h3l1-3h3" stroke="#20d020" fill="none" />
          </svg>
          <span className="text-sm leading-[14px]">Wave</span>
        </div>
        <button aria-label="Maximize" className="w-2.5 h-2.5 -mt-2 border border-black" />
      </div>
      <nav className="flex gap-[13px] h-[17px] -ml-3.5 text-[13px] leading-4">
        {MENUS.map(([pre, key, post]) => (
          <button key={pre + key + post} className="h-4">{pre}<u className="underline-offset-2">{key}</u>{post}</button>
        ))}
      </nav>
    </header>

    <div className="mt-0.5 border-t border-t-[#a0a0a0]">
      <div className="h-5 border-t border-t-white border-b border-b-[#a0a0a0] bg-[#99b4d1] flex items-center gap-1.5">
        <div className="flex items-center gap-1">
          <span className="w-[3px] h-3.5 bg-[#111] border-y border-[#777]" />
          <span className="font-['Noto_Sans',sans-serif]">Wave - Default</span>
        </div>
        <DockLines />
        <span className="w-5 h-2 bg-[radial-gradient(circle,#111_1px,transparent_1px)] bg-[size:4px_3px] -mx-1" />
        <DockLines />
        <button aria-label="Undock" className={`w-3 h-[13px] -ml-0.5 flex items-center justify-center ${RAISED}`}>
          <svg viewBox="0 0 9 9" className="w-[9px] h-[9px]" shapeRendering="crispEdges"><path d="M4.500 0v9M0 4.500h9M3 2.500h3M3 6.500h3" stroke="#000" strokeDasharray="1 1" /></svg>
        </button>
        <span className="w-1 h-[13px] -ml-0.5 bg-[#f0f0f0] border-l border-white" />
      </div>
    </div>

    <div role="toolbar" aria-label="Main" className="flex -ml-0.5">
      <Group handle={false}>
        <Tools items={['new', 'v', 'open', 'save', 'reload', 'print', '|', 'cut', 'copy', 'paste', 'undo', 'redo', '|', 'plus', 'v', 'find', 'tree']} />
      </Group>
      <Group><Tools items={['layers', 'query', 'simulate', 'breaks', 'end']} /></Group>
      <Group>
        <Tools items={['(link', 'jump', 'v', 'up', 'left', 'right', '|', 'restart']} />
        <input
          aria-label="Run length"
          defaultValue="100 ps"
          className="w-[60px] h-[18px] ml-1 pr-0.5 text-right text-[#808080] text-[11px] font-['Liberation_Mono',monospace] bg-[#f0f0f0] border border-t-[#808080] border-l-[#808080] border-b-white border-r-white"
        />
        <span className="flex flex-col w-3.5 mr-[5px] ml-px">
          <button aria-label="Increase" className={`h-[9px] flex items-center justify-center ${RAISED}`}><svg viewBox="0 0 6 4" className="w-1.5 h-1"><path d="M0 4h6L3 0z" /></svg></button>
          <button aria-label="Decrease" className={`h-[9px] flex items-center justify-center ${RAISED}`}><svg viewBox="0 0 6 4" className="w-1.5 h-1"><path d="M0 0h6L3 4z" /></svg></button>
        </span>
        <Tools items={['run', 'runAll', 'cont', 'end', 'stop', '|', '[profile', '[profile', 'hand']} />
      </Group>
      <Group><Tools items={['stepIn', 'stepOver', 'stepOut', '|', 'stepInC', 'v', 'stepOverC', 'v', 'stepOutC']} /></Group>
      <Group><Tools items={['flagAdd', 'v', 'flagDel', 'v', 'flagEdit', 'flagSave', 'v', 'flagGo']} /></Group>
      <Group><Tools items={['(select', '[zoomBox', '[pan', '[twoCur', '[edit', '|', 'light']} /></Group>
      <Group><Tools items={['curAdd', 'curDel', 'prevEdge', 'nextEdge', 'prevFall', 'nextFall', 'prevRise', 'nextRise']} /></Group>
    </div>

    <div role="toolbar" aria-label="Search" className="flex -ml-0.5">
      <Group handle={false}>
        <Tools items={['expand', 'v', 'collapse', 'v', 'addTree', '|']} />
        <label htmlFor="wave-search" className="w-[41px] ml-1.5">Search:</label>
        <input id="wave-search" className="w-[116px] h-[18px] bg-white border border-t-[#808080] border-l-[#808080] border-b-white border-r-white" />
        <button aria-label="Search history" className={`w-[17px] h-[17px] ml-0.5 mr-0.5 flex items-center justify-center ${RAISED}`}>
          <svg viewBox="0 0 12 6" className="w-3 h-1.5"><path d="M0 0h12L6 6z" /></svg>
        </button>
        <Tools items={['searchBack', 'searchFwd', 'searchOpt']} />
        <span className="w-[7px]" />
      </Group>
    </div>

    <div role="toolbar" aria-label="Zoom" className="flex">
      <Group handle={false}><Tools items={['zoomIn', 'zoomOut', 'zoomFull', 'zoomCur', 'zoomTwo', 'zoomArea']} /></Group>
      <Group><Tools items={['(modeLine', '[modeBlue', '[modeGreen', '|', 'dither', 'ditherEdge', 'dotEdge', 'dotEdgeY']} /></Group>
    </div>

    <main className="flex mt-px border-t border-t-white">
      <div className="w-[253px] shrink-0 border-t border-t-[#a0a0a0]">
        <SignalTable />
        <div className="flex h-5 pt-0.5 border-b border-b-[#808080] bg-[#f0f0f0]">
          <div className="flex w-[147px] mr-[3px] bg-[#f8f8f8]">
            <span className="w-3.5 flex justify-end overflow-hidden"><ScrollButton dir="left" label="Scroll names left" /></span>
            <span className={`w-[95px] ${RAISED}`} />
            <span className="flex-1" />
            <ScrollButton dir="right" label="Scroll names right" />
          </div>
          <div className="flex justify-between w-[100px] bg-[#f8f8f8]">
            <ScrollButton dir="left" dim label="Scroll values left" />
            <ScrollButton dir="right" dim label="Scroll values right" />
          </div>
        </div>
      </div>
      <div className="flex-1 min-w-0 overflow-hidden border-t border-t-[#a0a0a0]">
        <div className="h-[21px] bg-black border-b-2 border-b-white shadow-[inset_0_-1px_0_#a0a0a0]">
          <svg width="600" height="18" className="block" shapeRendering="crispEdges" aria-hidden="true"><R x={CURSOR_X} y={1} w={3} h={17} c={GOLD} /></svg>
        </div>
        <Waves />
        <div className="h-[3px] border-t border-t-[#a0a0a0] bg-white" />
        <TimeAxis />
        <div className="h-[17px] bg-black border-t border-t-[#808080]">
          <svg width="700" height="16" className="block" shapeRendering="crispEdges" role="img" aria-label="Cursor time">
            <rect x="512.500" y=".5" width="80" height="15" fill="none" stroke={GOLD} />
            <text x="552.500" y="13" fill={GOLD} textAnchor="middle" className="text-[11px]">734,365.656 ns</text>
          </svg>
        </div>
        <div className="h-[3px] border-t border-t-[#a0a0a0] bg-white" />
        <div className="flex h-5 bg-[#c8c8c8] border-t border-t-[#696969] border-b border-b-[#808080]">
          <ScrollButton dir="left" label="Scroll waves left" />
          <div className="flex-1 flex">
            <span className="w-[396px] shrink" />
            <div className={`w-[29%] ${RAISED}`}>
              <span className="block ml-[34%] w-px h-4 bg-[#ffd700]" />
            </div>
          </div>
          <span className="w-2.5 overflow-hidden"><ScrollButton dir="right" label="Scroll waves right" /></span>
        </div>
      </div>
    </main>

    <div className="flex items-center mt-[3px] h-5">
      <button aria-label="Close find" className="w-[5px] h-[13px] mr-px border-r border-y border-[#696969] flex items-center justify-end">
        <svg viewBox="0 0 4 7" className="w-1 h-[7px]"><path d="M0 3.500l3-3M0 3.500l3 3" stroke="#000" fill="none" /></svg>
      </button>
      <label htmlFor="find" className="w-[30px]">Find:</label>
      <div className="flex-1 flex items-center h-5 bg-white border-t border-t-[#808080] border-l border-l-[#808080]">
        <button aria-label="Find options" className="flex items-end pl-1">
          <svg viewBox="0 0 16 16" className="w-4 h-4"><Bin c="#3a4650" /></svg>
          <svg viewBox="0 0 5 3" className="w-[5px] h-[3px] -ml-1"><path d="M0 0h5L2.500 3z" /></svg>
        </button>
        <input id="find" className="flex-1 h-[18px] bg-white outline-none" />
      </div>
      <button aria-label="Find" className={`w-5 h-5 ml-[3px] flex items-center justify-center ${RAISED}`}>
        <svg viewBox="0 0 16 16" className="w-4 h-4"><circle cx="8" cy="8" r="7" fill="#e4ecf4" stroke="#a8b8c8" strokeDasharray="1 1" /><path d="M7 5l3 3-3 3" fill="none" stroke="#6080a8" /></svg>
      </button>
      <button aria-label="Direction" className={`w-5 h-5 ml-[7px] flex items-center justify-center ${RAISED}`}>
        <svg viewBox="0 0 16 16" className="w-4 h-4"><path d="M6.500 2h4v8h2l-3 5-3-5z" fill="#5cc050" stroke="#6fae68" /></svg>
      </button>
      <button aria-label="Find all" className={`w-5 h-5 ml-0.5 flex items-center justify-center ${RAISED}`}>
        <svg viewBox="0 0 16 16" className="w-4 h-4" shapeRendering="crispEdges"><path d="M2.500 1.500h8l3 3v10h-11z" fill="#fff" stroke="#000" strokeDasharray="1 1" /><path d="M5 4l3 3M8 4l-3 3M7 9l3 4M11 9l-2 3" stroke="#e02020" strokeDasharray="2 1" /></svg>
      </button>
      <span className="mx-[7px] h-4 border-l border-dotted border-black" />
      <button className="flex items-center gap-2 w-[70px] whitespace-nowrap">Search For<svg viewBox="0 0 8 5" className="w-2 h-[5px]"><path d="M0 0h8L4 5z" /></svg></button>
      <span className="ml-2 h-4 border-l border-dotted border-black" />
      <input type="checkbox" id="regex" className="appearance-none w-3 h-3 ml-4 bg-white border border-t-[#696969] border-l-[#696969] border-b-[#e3e3e3] border-r-[#e3e3e3]" />
      <label htmlFor="regex" className="ml-1.5 w-[15px] whitespace-nowrap font-bold text-[#8b0000]">{'{'}<span className="text-black">a</span>{'}'}</label>
      <span className="relative w-3 h-3 ml-3">
        <input type="checkbox" defaultChecked aria-label="Wrap" className="appearance-none block w-3 h-3 bg-white border border-t-[#696969] border-l-[#696969] border-b-[#e3e3e3] border-r-[#e3e3e3]" />
        <svg viewBox="0 0 12 12" className="absolute inset-0 w-3 h-3 pointer-events-none"><path d="M3 5l2 3 5-5" stroke="#000" strokeWidth="2" fill="none" /></svg>
      </span>
    </div>

    <footer className="flex mt-1.5 h-[5px] gap-0.5">
      <span className="w-[157px] border-t border-t-[#a0a0a0] border-r border-r-white" />
      <span className="flex-1 border-t border-t-[#a0a0a0] border-l border-l-[#a0a0a0]" />
    </footer>

    <svg width="1200" height="960" className="absolute left-0 top-0 pointer-events-none" aria-hidden="true">
      {ARROWS.map((points) => <polygon key={points} points={points} fill="#ff3b3b" />)}
    </svg>
    <span className="absolute right-2 bottom-2 text-base leading-5 text-[#c8c8c8]/80 pointer-events-none font-['Liberation_Sans',sans-serif]">
      https://blog.csdn.net/zhangningning1996
    </span>
  </div>
);

export default App;
